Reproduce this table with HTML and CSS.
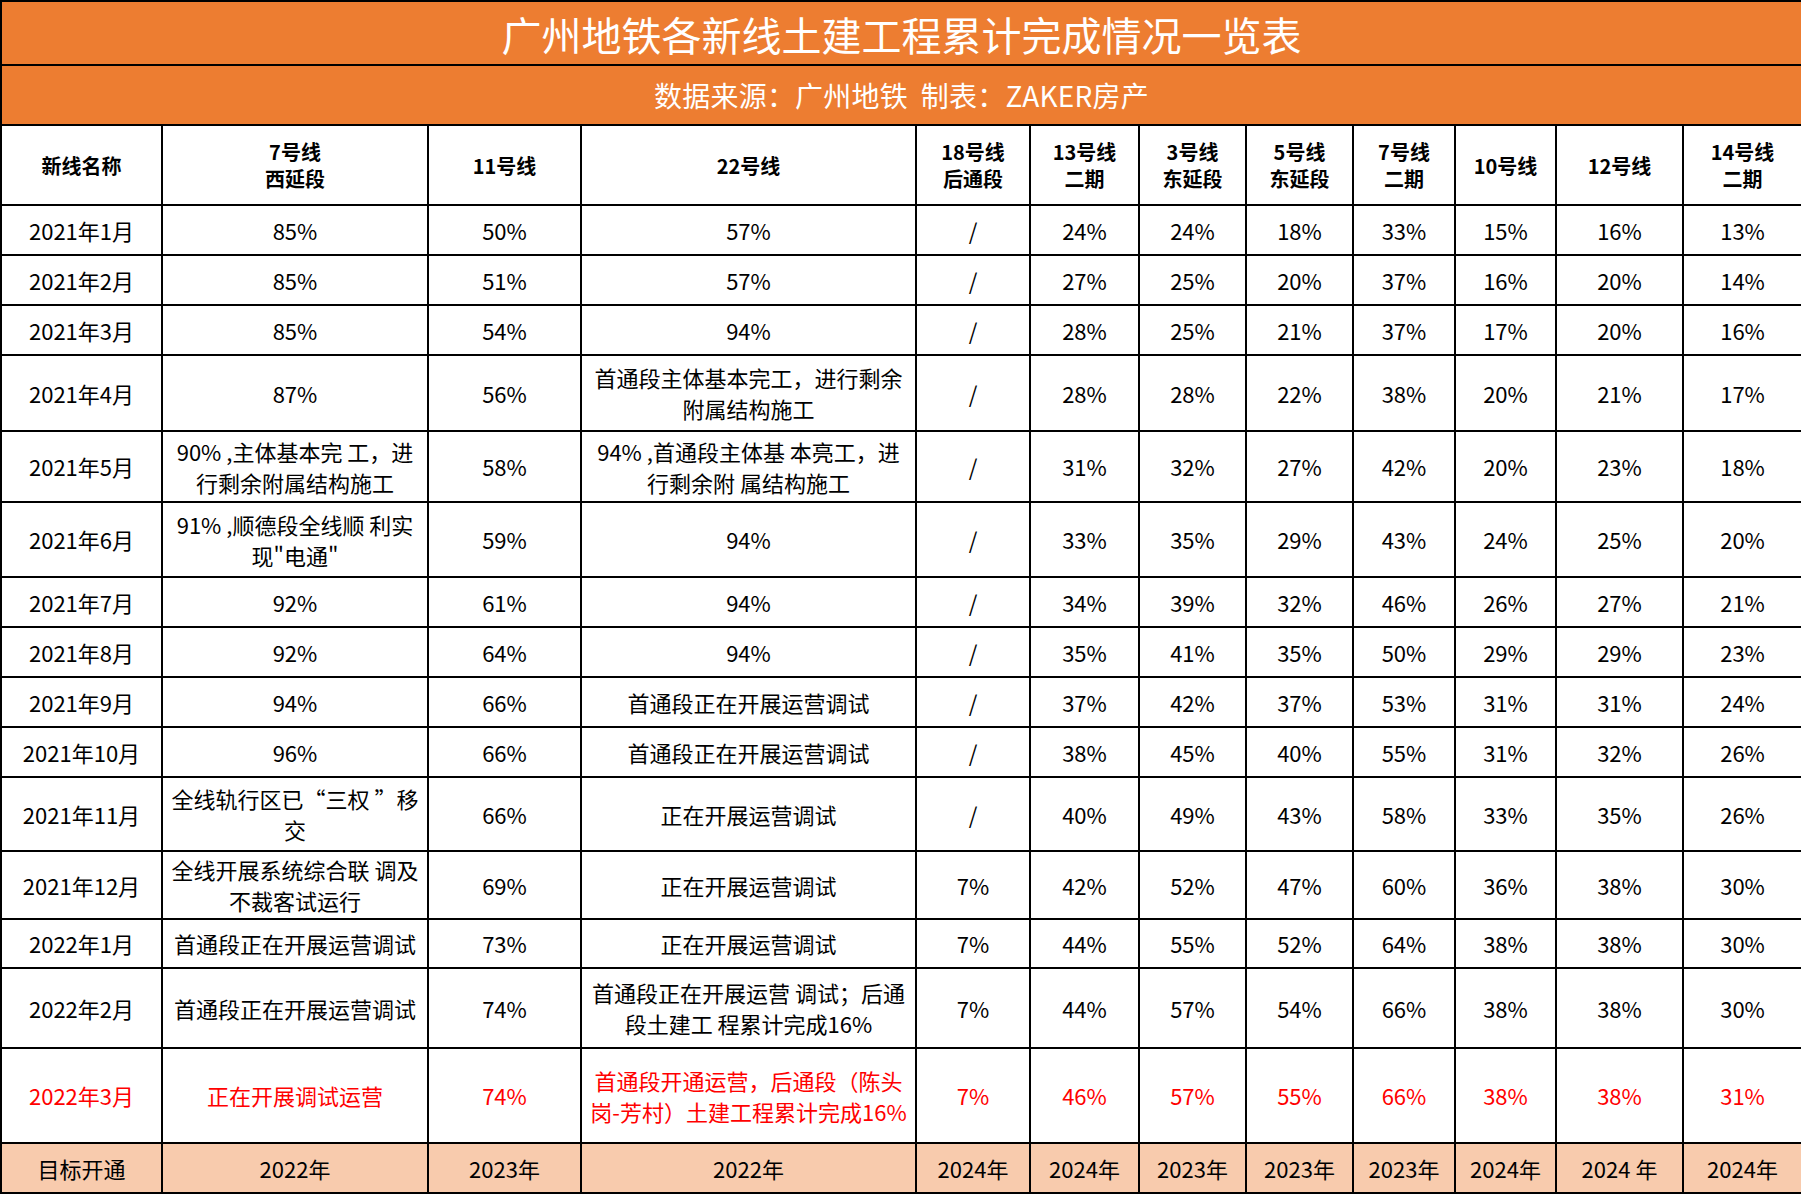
FILE: index.html
```html
<!DOCTYPE html>
<html lang="zh-CN">
<head>
<meta charset="utf-8">
<title>广州地铁各新线土建工程累计完成情况一览表</title>
<link rel="stylesheet" href="styles.css">
</head>
<body>
<table class="sheet">
  <colgroup>
    <col class="c-name"><col class="c-7w"><col class="c-11"><col class="c-22">
    <col class="c-18"><col class="c-13"><col class="c-3"><col class="c-5">
    <col class="c-7e"><col class="c-10"><col class="c-12"><col class="c-14">
  </colgroup>
  <tr class="title-row"><td colspan="12">广州地铁各新线土建工程累计完成情况一览表</td></tr>
  <tr class="sub-row"><td colspan="12">数据来源：广州地铁&nbsp;&nbsp;制表：ZAKER房产</td></tr>
  <tr class="head-row">
    <th>新线名称</th><th>7号线<br>西延段</th><th>11号线</th><th>22号线</th>
    <th>18号线<br>后通段</th><th>13号线<br>二期</th><th>3号线<br>东延段</th><th>5号线<br>东延段</th>
    <th>7号线<br>二期</th><th>10号线</th><th>12号线</th><th>14号线<br>二期</th>
  </tr>
  <tr class="h50"><td>2021年1月</td><td>85%</td><td>50%</td><td>57%</td><td>/</td><td>24%</td><td>24%</td><td>18%</td><td>33%</td><td>15%</td><td>16%</td><td>13%</td></tr>
  <tr class="h50"><td>2021年2月</td><td>85%</td><td>51%</td><td>57%</td><td>/</td><td>27%</td><td>25%</td><td>20%</td><td>37%</td><td>16%</td><td>20%</td><td>14%</td></tr>
  <tr class="h50"><td>2021年3月</td><td>85%</td><td>54%</td><td>94%</td><td>/</td><td>28%</td><td>25%</td><td>21%</td><td>37%</td><td>17%</td><td>20%</td><td>16%</td></tr>
  <tr class="h76"><td>2021年4月</td><td>87%</td><td>56%</td><td>首通段主体基本完工，进行剩余<br>附属结构施工</td><td>/</td><td>28%</td><td>28%</td><td>22%</td><td>38%</td><td>20%</td><td>21%</td><td>17%</td></tr>
  <tr class="h71"><td>2021年5月</td><td>90% ,主体基本完 工，进<br>行剩余附属结构施工</td><td>58%</td><td>94% ,首通段主体基 本亮工，进<br>行剩余附 属结构施工</td><td>/</td><td>31%</td><td>32%</td><td>27%</td><td>42%</td><td>20%</td><td>23%</td><td>18%</td></tr>
  <tr class="h75"><td>2021年6月</td><td>91% ,顺德段全线顺 利实<br>现"电通"</td><td>59%</td><td>94%</td><td>/</td><td>33%</td><td>35%</td><td>29%</td><td>43%</td><td>24%</td><td>25%</td><td>20%</td></tr>
  <tr class="h50"><td>2021年7月</td><td>92%</td><td>61%</td><td>94%</td><td>/</td><td>34%</td><td>39%</td><td>32%</td><td>46%</td><td>26%</td><td>27%</td><td>21%</td></tr>
  <tr class="h50"><td>2021年8月</td><td>92%</td><td>64%</td><td>94%</td><td>/</td><td>35%</td><td>41%</td><td>35%</td><td>50%</td><td>29%</td><td>29%</td><td>23%</td></tr>
  <tr class="h50"><td>2021年9月</td><td>94%</td><td>66%</td><td>首通段正在开展运营调试</td><td>/</td><td>37%</td><td>42%</td><td>37%</td><td>53%</td><td>31%</td><td>31%</td><td>24%</td></tr>
  <tr class="h50"><td>2021年10月</td><td>96%</td><td>66%</td><td>首通段正在开展运营调试</td><td>/</td><td>38%</td><td>45%</td><td>40%</td><td>55%</td><td>31%</td><td>32%</td><td>26%</td></tr>
  <tr class="h74"><td>2021年11月</td><td>全线轨行区已“三权 ”移<br>交</td><td>66%</td><td>正在开展运营调试</td><td>/</td><td>40%</td><td>49%</td><td>43%</td><td>58%</td><td>33%</td><td>35%</td><td>26%</td></tr>
  <tr class="h68"><td>2021年12月</td><td>全线开展系统综合联 调及<br>不裁客试运行</td><td>69%</td><td>正在开展运营调试</td><td>7%</td><td>42%</td><td>52%</td><td>47%</td><td>60%</td><td>36%</td><td>38%</td><td>30%</td></tr>
  <tr class="h49"><td>2022年1月</td><td>首通段正在开展运营调试</td><td>73%</td><td>正在开展运营调试</td><td>7%</td><td>44%</td><td>55%</td><td>52%</td><td>64%</td><td>38%</td><td>38%</td><td>30%</td></tr>
  <tr class="h80"><td>2022年2月</td><td>首通段正在开展运营调试</td><td>74%</td><td>首通段正在开展运营 调试；后通<br>段土建工 程累计完成16%</td><td>7%</td><td>44%</td><td>57%</td><td>54%</td><td>66%</td><td>38%</td><td>38%</td><td>30%</td></tr>
  <tr class="h95 latest"><td>2022年3月</td><td>正在开展调试运营</td><td>74%</td><td>首通段开通运营，后通段（陈头<br>岗-芳村）土建工程累计完成16%</td><td>7%</td><td>46%</td><td>57%</td><td>55%</td><td>66%</td><td>38%</td><td>38%</td><td>31%</td></tr>
  <tr class="h50 target"><td>目标开通</td><td>2022年</td><td>2023年</td><td>2022年</td><td>2024年</td><td>2024年</td><td>2023年</td><td>2023年</td><td>2023年</td><td>2024年</td><td>2024 年</td><td>2024年</td></tr>
</table>
</body>
</html>
```

FILE: styles.css
```css
html, body {
  margin: 0;
  padding: 0;
  background: #ffffff;
}

.sheet {
  width: 1801px;
  table-layout: fixed;
  border-collapse: collapse;
  font-family: "Noto Sans CJK SC", "Noto Sans", sans-serif;
  color: #000;
}

.c-name { width: 161px; }
.c-7w { width: 266px; }
.c-11 { width: 153px; }
.c-22 { width: 335px; }
.c-18 { width: 114px; }
.c-13 { width: 109px; }
.c-3 { width: 107px; }
.c-5 { width: 107px; }
.c-7e { width: 102px; }
.c-10 { width: 101px; }
.c-12 { width: 127px; }
.c-14 { width: 119px; }

.sheet td,
.sheet th {
  border: 2px solid #000;
  padding: 0;
  text-align: center;
  vertical-align: middle;
  font-size: 22px;
  line-height: 31px;
  font-weight: 400;
  white-space: nowrap;
}

.title-row { height: 64px; }
.title-row td {
  background: #ed7d31;
  color: #fff;
  font-size: 40px;
  line-height: 48px;
  padding-top: 2px;
}

.sub-row { height: 60px; }
.sub-row td {
  background: #ed7d31;
  color: #fff;
  font-size: 28px;
  line-height: 36px;
  letter-spacing: 0.2px;
}

.head-row { height: 80px; }
.sheet .head-row th {
  font-size: 20px;
  font-weight: 700;
  line-height: 27px;
}

.h49 { height: 49px; }
.h50 { height: 50px; }
.h68 { height: 68px; }
.h71 { height: 71px; }
.h74 { height: 74px; }
.h75 { height: 75px; }
.h76 { height: 76px; }
.h80 { height: 80px; }
.h95 { height: 95px; }

.latest td { color: #ff0000; }

.target td { background: #f8cbad; }
```
